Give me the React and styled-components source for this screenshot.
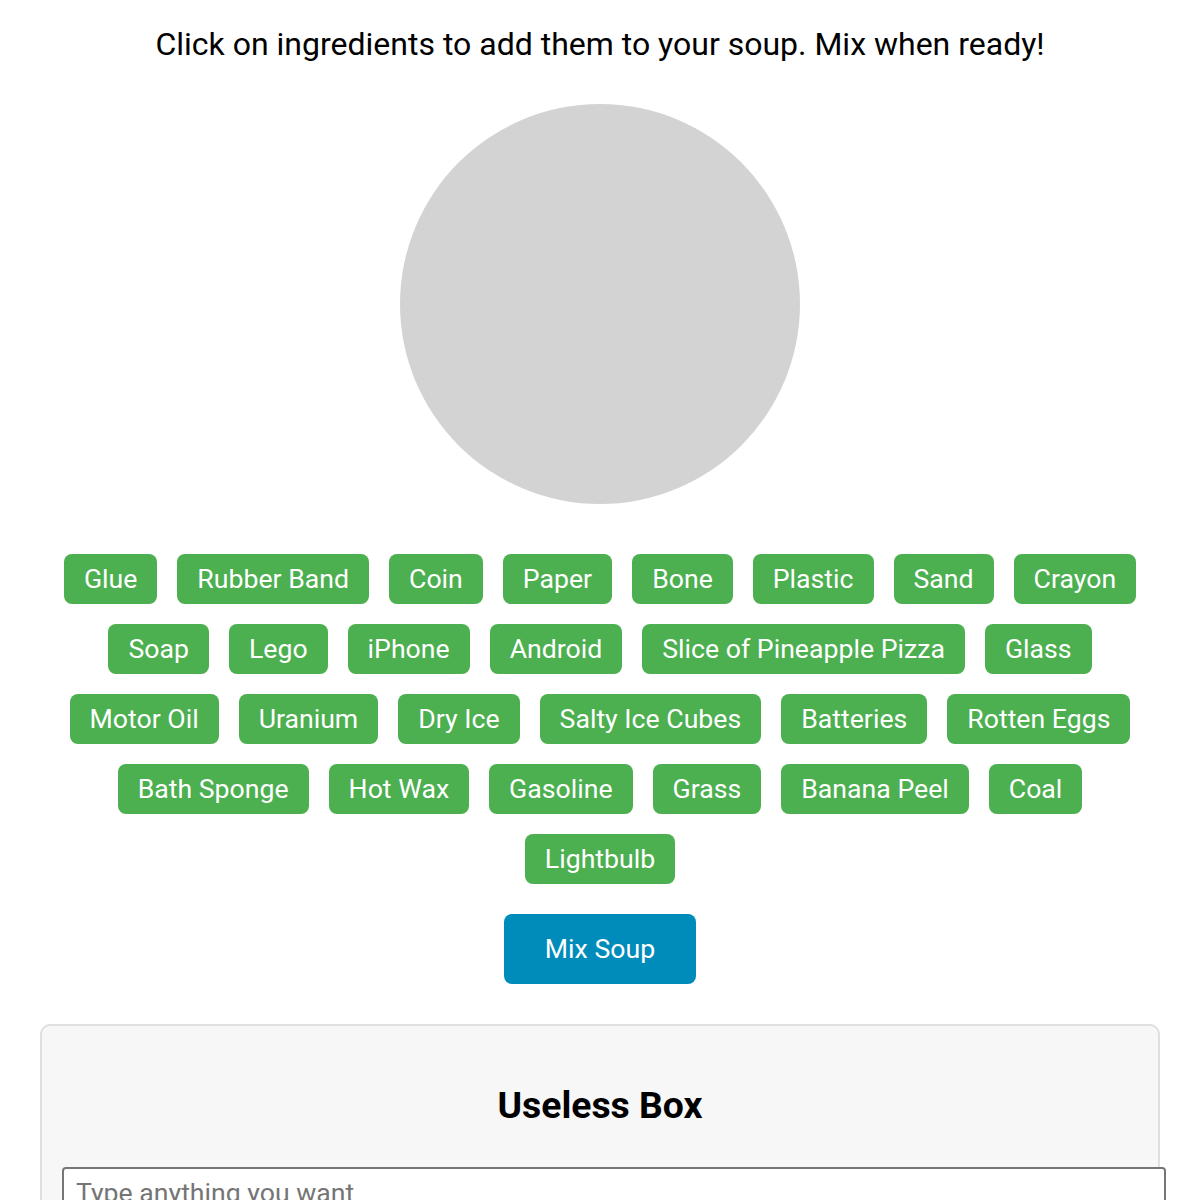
import React, { useState } from 'react'
import styled, { createGlobalStyle } from 'styled-components'

const GlobalStyle = createGlobalStyle`
  body {
    margin: 8px;
    background: #fff;
    font-family: Roboto, 'Liberation Sans', sans-serif;
    color: #000;
  }
`

const Page = styled.div`
  text-align: center;
`

const Instructions = styled.p`
  font-size: 32px;
  margin: 17px 0 0;
`

const Pot = styled.div`
  width: 400px;
  height: 400px;
  border-radius: 50%;
  background: #d3d3d3;
  margin: 41px auto 0;
`

const Ingredients = styled.div`
  display: flex;
  flex-wrap: wrap;
  justify-content: center;
  margin: 40px 32px 0;
`

const IngredientButton = styled.button`
  background: #4caf50;
  color: #fff;
  border: none;
  border-radius: 8px;
  font-family: Roboto, 'Liberation Sans', sans-serif;
  font-size: 26.67px;
  line-height: 30px;
  padding: 10px 20px;
  margin: 10px;
  cursor: pointer;
`

const MixButton = styled.button`
  background: #008cba;
  color: #fff;
  border: none;
  border-radius: 8px;
  font-family: Roboto, 'Liberation Sans', sans-serif;
  font-size: 26.67px;
  line-height: 30px;
  padding: 20px 41px;
  margin-top: 20px;
  cursor: pointer;
`

const UselessBox = styled.section`
  margin: 40px 32px 0;
  padding: 20px;
  background: #f7f7f7;
  border: 2px solid #e0e0e0;
  border-radius: 10px;
  text-align: left;
`

const BoxTitle = styled.h2`
  font-size: 37.33px;
  font-weight: 700;
  text-align: center;
  margin: 37px 0 40px;
`

const BoxInput = styled.input`
  display: block;
  width: 100%;
  padding: 8px 12px;
  border: 2px solid #767676;
  border-radius: 4px;
  font-family: Roboto, 'Liberation Sans', sans-serif;
  font-size: 26.67px;
  background: #fff;

  &::placeholder {
    color: #757575;
  }
`

const ingredients = [
  'Glue', 'Rubber Band', 'Coin', 'Paper', 'Bone', 'Plastic', 'Sand', 'Crayon',
  'Soap', 'Lego', 'iPhone', 'Android', 'Slice of Pineapple Pizza', 'Glass',
  'Motor Oil', 'Uranium', 'Dry Ice', 'Salty Ice Cubes', 'Batteries', 'Rotten Eggs',
  'Bath Sponge', 'Hot Wax', 'Gasoline', 'Grass', 'Banana Peel', 'Coal',
  'Lightbulb',
]

export default function App() {
  const [soup, setSoup] = useState([])

  return (
    <Page>
      <GlobalStyle />
      <Instructions>Click on ingredients to add them to your soup. Mix when ready!</Instructions>
      <Pot />
      <Ingredients>
        {ingredients.map(name => (
          <IngredientButton key={name} onClick={() => setSoup([...soup, name])}>
            {name}
          </IngredientButton>
        ))}
      </Ingredients>
      <MixButton>Mix Soup</MixButton>
      <UselessBox>
        <BoxTitle>Useless Box</BoxTitle>
        <BoxInput placeholder="Type anything you want" />
      </UselessBox>
    </Page>
  )
}
